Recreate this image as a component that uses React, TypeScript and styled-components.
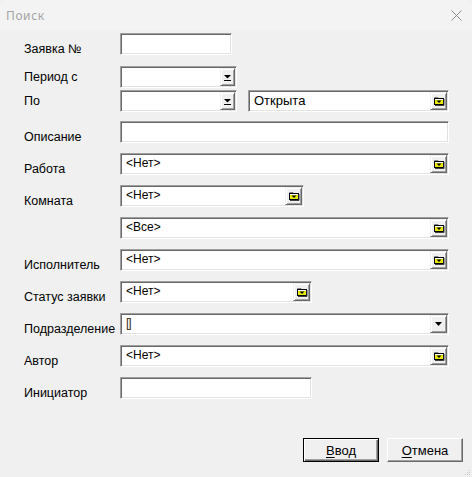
import React from "react";
import styled, { createGlobalStyle } from "styled-components";

const GlobalStyle = createGlobalStyle`
  html, body {
    margin: 0;
    padding: 0;
    background: #f0f0f0;
  }
  * {
    box-sizing: border-box;
  }
`;

const Window = styled.div`
  position: relative;
  width: 472px;
  height: 477px;
  display: flex;
  flex-direction: column;
  background: #f0f0f0;
  font-family: "Liberation Sans", Arial, sans-serif;
  color: #000;
  overflow: hidden;
`;

const TitleBar = styled.div`
  height: 30px;
  flex: none;
  display: flex;
  align-items: center;
  justify-content: space-between;
  padding: 0 10px 0 6px;
  background: #f3f3f3;
  border-radius: 7px 7px 0 0;
`;

const Title = styled.span`
  font-family: "Noto Sans", "Liberation Sans", sans-serif;
  font-size: 12px;
  font-weight: 400;
  letter-spacing: 0.6px;
  color: #a3a3a3;
`;

const Form = styled.div`
  display: flex;
  flex-direction: column;
  padding-top: 3px;
`;

const Row = styled.div<{ $gap: number }>`
  display: flex;
  height: 22px;
  margin-top: ${(p) => p.$gap}px;
`;

const Label = styled.div<{ $low?: boolean }>`
  width: 120px;
  flex: none;
  padding-left: 24px;
  font-size: 12.5px;
  line-height: 14px;
  white-space: nowrap;
  align-self: ${(p) => (p.$low ? "flex-end" : "center")};
  margin-bottom: ${(p) => (p.$low ? "-1px" : "0")};
`;

const Sunken = styled.div<{ $w: number; $ml?: number }>`
  width: ${(p) => p.$w}px;
  height: 22px;
  margin-left: ${(p) => p.$ml ?? 0}px;
  display: flex;
  align-items: stretch;
  background: #fff;
  border-top: 1px solid #a0a0a0;
  border-left: 1px solid #a0a0a0;
  border-right: 1px solid #fff;
  border-bottom: 1px solid #fff;
  box-shadow: inset 1px 1px 0 #696969, inset -1px -1px 0 #e3e3e3;
  padding: 1px;
`;

const Value = styled.span<{ $size?: number }>`
  flex: 1;
  padding-left: 4px;
  font-size: ${(p) => p.$size ?? 12}px;
  line-height: 17px;
  white-space: nowrap;
  overflow: hidden;
`;

const Caret = styled.span`
  color: #3a2a10;
  font-size: 12px;
  letter-spacing: -1px;
`;

const DropButton = styled.div<{ $w?: number }>`
  width: ${(p) => p.$w ?? 17}px;
  flex: none;
  display: flex;
  align-items: center;
  justify-content: center;
  background: #f0f0f0;
  border-top: 1px solid #f0f0f0;
  border-left: 1px solid #f0f0f0;
  border-right: 1px solid #696969;
  border-bottom: 1px solid #696969;
  box-shadow: inset 1px 1px 0 #fff, inset -1px -1px 0 #a0a0a0;
`;

const Footer = styled.div`
  margin-top: auto;
  display: flex;
  justify-content: flex-end;
  gap: 8px;
  padding: 0 9px 15px 0;
`;

const Button = styled.div<{ $default?: boolean }>`
  width: 76px;
  height: 24px;
  display: flex;
  align-items: center;
  justify-content: center;
  font-size: 13px;
  background: #f0f0f0;
  border: 1px solid;
  border-color: ${(p) =>
    p.$default ? "#000" : "#fff #696969 #696969 #fff"};
  box-shadow: ${(p) =>
    p.$default
      ? "inset 1px 1px 0 #fff, inset -1px -1px 0 #696969, inset -2px -2px 0 #a0a0a0"
      : "inset -1px -1px 0 #a0a0a0"};
  u {
    text-decoration: underline;
    text-underline-offset: 2px;
  }
`;

const Grip = styled.svg`
  position: absolute;
  right: 1px;
  bottom: 1px;
`;

const CloseIcon = () => (
  <svg width="11" height="11" viewBox="0 0 11 11">
    <path d="M0.5 0.5 L10.5 10.5 M10.5 0.5 L0.5 10.5" stroke="#8c8c8c" strokeWidth="1" />
  </svg>
);

const DateArrow = () => (
  <svg width="7" height="7" viewBox="0 0 7 7">
    <path d="M0 1 H7 L3.5 4.5 Z" fill="#000" />
    <rect x="0" y="6" width="7" height="1" fill="#000" />
  </svg>
);

const PlainArrow = () => (
  <svg width="7" height="4" viewBox="0 0 7 4">
    <path d="M0 0 H7 L3.5 4 Z" fill="#000" />
  </svg>
);

const Folder = () => (
  <svg width="12" height="10" viewBox="0 0 12 10">
    <path d="M1.5 2.5 V1.5 H5 L6 2.5" fill="none" stroke="#808080" />
    <rect x="1.5" y="2.5" width="9" height="6" fill="#fff" stroke="#000" />
    <rect x="2" y="4" width="8" height="4" fill="#e8e800" />
    <path d="M3.5 4.5 H8.5 L6 7 Z" fill="#000" />
    <path d="M11 3 V9.5 H2" fill="none" stroke="#404040" />
  </svg>
);

type Kind = "date" | "folder" | "plain";

const Combo = ({
  w,
  ml,
  value,
  size,
  kind,
  children,
}: {
  w: number;
  ml?: number;
  value?: string;
  size?: number;
  kind: Kind;
  children?: React.ReactNode;
}) => (
  <Sunken $w={w} $ml={ml}>
    <Value $size={size}>{children ?? value}</Value>
    <DropButton $w={kind === "date" ? 15 : 17}>
      {kind === "date" && <DateArrow />}
      {kind === "folder" && <Folder />}
      {kind === "plain" && <PlainArrow />}
    </DropButton>
  </Sunken>
);

const App = () => (
  <>
    <GlobalStyle />
    <Window>
      <TitleBar>
        <Title>Поиск</Title>
        <CloseIcon />
      </TitleBar>
      <Form>
        <Row $gap={0}>
          <Label $low>Заявка №</Label>
          <Sunken $w={112} />
        </Row>
        <Row $gap={11}>
          <Label>Период с</Label>
          <Combo w={117} kind="date" />
        </Row>
        <Row $gap={2}>
          <Label>По</Label>
          <Combo w={117} kind="date" />
          <Combo w={201} ml={11} kind="folder" value="Открыта" size={13} />
        </Row>
        <Row $gap={9}>
          <Label $low>Описание</Label>
          <Sunken $w={329} />
        </Row>
        <Row $gap={10}>
          <Label $low>Работа</Label>
          <Combo w={329} kind="folder" value="<Нет>" />
        </Row>
        <Row $gap={10}>
          <Label $low>Комната</Label>
          <Combo w={184} kind="folder" value="<Нет>" />
        </Row>
        <Row $gap={10}>
          <Label />
          <Combo w={329} kind="folder" value="<Все>" />
        </Row>
        <Row $gap={10}>
          <Label $low>Исполнитель</Label>
          <Combo w={329} kind="folder" value="<Нет>" />
        </Row>
        <Row $gap={10}>
          <Label $low>Статус заявки</Label>
          <Combo w={192} kind="folder" value="<Нет>" />
        </Row>
        <Row $gap={10}>
          <Label $low>Подразделение</Label>
          <Combo w={329} kind="plain">
            <Caret>[]</Caret>
          </Combo>
        </Row>
        <Row $gap={10}>
          <Label $low>Автор</Label>
          <Combo w={329} kind="folder" value="<Нет>" />
        </Row>
        <Row $gap={10}>
          <Label $low>Инициатор</Label>
          <Sunken $w={192} />
        </Row>
      </Form>
      <Footer>
        <Button $default>
          <span>
            <u>В</u>вод
          </span>
        </Button>
        <Button>
          <span>
            <u>О</u>тмена
          </span>
        </Button>
      </Footer>
      <Grip width="10" height="10" viewBox="0 0 10 10">
        <rect x="8" y="4" width="1" height="1" fill="#c8c8c8" />
        <rect x="6" y="6" width="1" height="1" fill="#c8c8c8" />
        <rect x="8" y="6" width="1" height="1" fill="#c8c8c8" />
        <rect x="4" y="8" width="1" height="1" fill="#c8c8c8" />
        <rect x="6" y="8" width="1" height="1" fill="#c8c8c8" />
        <rect x="8" y="8" width="1" height="1" fill="#c8c8c8" />
      </Grip>
    </Window>
  </>
);

export default App;
